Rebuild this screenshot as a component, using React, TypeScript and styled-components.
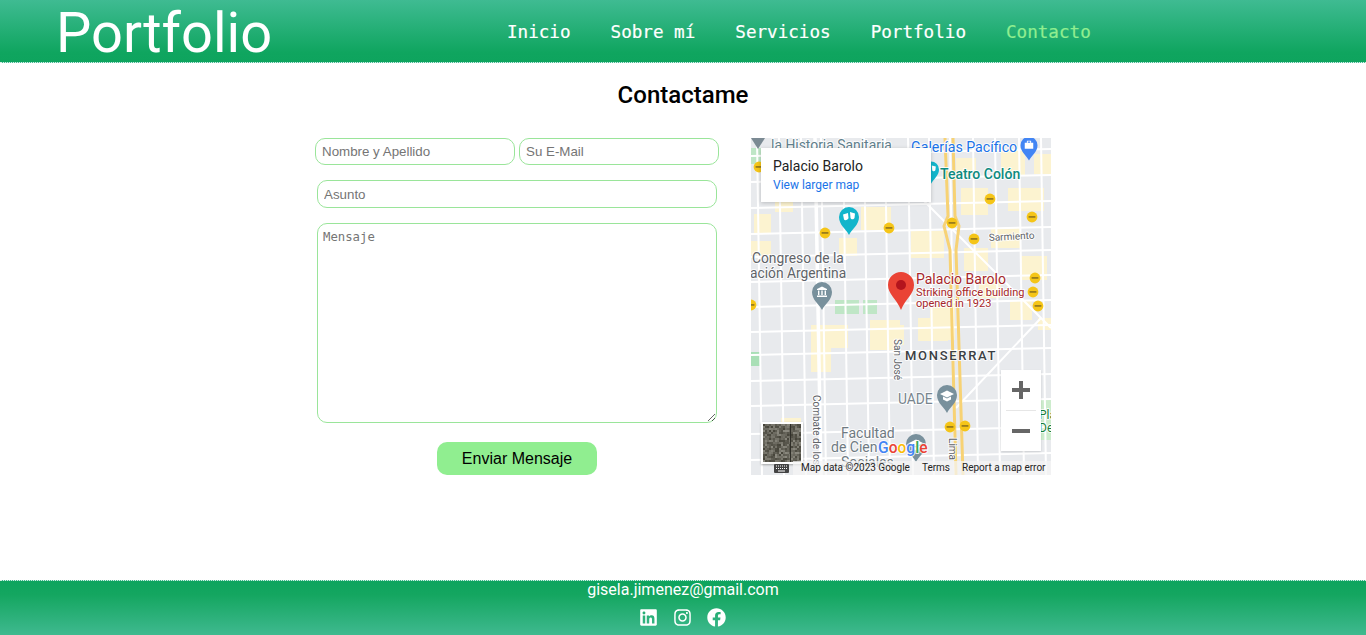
import React from "react";
import styled, { createGlobalStyle } from "styled-components";
import { FaLinkedin, FaInstagram, FaFacebook } from "react-icons/fa";

const Global = createGlobalStyle`
  html, body { margin: 0; padding: 0; background: #fff; }
  body { font-family: Roboto, "Liberation Sans", sans-serif; }
`;

const Page = styled.div`
  width: 1366px; height: 635px; display: flex; flex-direction: column; overflow: hidden;
`;
const Header = styled.header`
  height: 62px; flex: none; display: flex; align-items: center;
  background: linear-gradient(to bottom, #3fbb92 0%, #0fa55f 85%, #0ea45e 100%);
  border-bottom: 1px dotted #d8efe4;
  padding-left: 56px;
`;
const Logo = styled.h1`
  margin: 4px 0 0; width: 451px; font: 400 56px/58px Roboto, sans-serif; color: #fff; white-space: nowrap;
`;
const Nav = styled.nav`display: flex; gap: 40px; margin-top: 1px;`;
const NavLink = styled.a<{ $active?: boolean }>`
  font: 17.6px/24px "DejaVu Sans Mono", "Liberation Mono", monospace;
  -webkit-text-stroke: 0.2px currentColor;
  color: ${p => (p.$active ? "#90ee90" : "#fff")};
`;
const Main = styled.main`flex: 1; display: flex; flex-direction: column; align-items: center;`;
const Title = styled.h2`
  margin: 17px 0 28px; font: 500 24px/30px Roboto, sans-serif; color: #000;
`;
const Content = styled.div`display: flex; gap: 32px; align-items: flex-start;`;
const Form = styled.form`width: 404px; display: flex; flex-direction: column; align-items: center;`;
const Row = styled.div`display: flex; gap: 4px;`;
const Field = styled.input<{ $w: number; $h: number; $mt?: number }>`
  box-sizing: border-box; width: ${p => p.$w}px; height: ${p => p.$h}px; margin-top: ${p => p.$mt ?? 0}px;
  border: 1px solid #9ae59a; border-radius: 10px; padding: 0 6px; outline: none; background: #fff;
  font: 13.33px "Liberation Sans", Arial, sans-serif;
  &::placeholder { color: #757575; opacity: 1; }
`;
const Message = styled.textarea`
  box-sizing: border-box; width: 400px; height: 200px; margin-top: 15px; display: block;
  border: 1px solid #9ae59a; border-radius: 10px; padding: 6px 5px; outline: none; resize: vertical;
  font: 12.3px/15px "DejaVu Sans Mono", monospace; background: #fff;
  &::placeholder { color: #757575; opacity: 1; }
`;
const SendButton = styled.button`
  width: 160px; height: 33px; margin-top: 19px; border: none; border-radius: 10px;
  background: #90ee90; color: #000; font: 16px "Liberation Sans", Arial, sans-serif; padding: 0;
`;
const MapFrame = styled.div`position: relative; width: 300px; height: 337px; overflow: hidden; background: #e8eaed; flex: none;`;
const MapArt = styled.svg`
  display: block;
  text { paint-order: stroke; stroke: rgba(255,255,255,.85); stroke-width: 2px; stroke-linejoin: round; }
`;
const InfoCard = styled.div`
  position: absolute; left: 10px; top: 10px; width: 170px; height: 54px; box-sizing: border-box;
  background: #fff; padding: 10px 12px; box-shadow: 0 1px 4px rgba(0,0,0,.2);
`;
const InfoName = styled.div`font: 400 14px/17px Roboto, sans-serif; color: #222;`;
const InfoLink = styled.a`display: block; margin-top: 3px; font: 12px/15px Roboto, sans-serif; color: #1a73e8;`;
const Zoom = styled.div`
  position: absolute; left: 250px; top: 232px; width: 40px; height: 81px; background: #fff;
  display: flex; flex-direction: column; align-items: center;
  box-shadow: 0 1px 2px rgba(0,0,0,.12);
`;
const ZoomBtn = styled.div`flex: 1; display: flex; align-items: center; justify-content: center;`;
const ZoomRule = styled.div`width: 30px; height: 1px; background: #e6e6e6;`;
const Thumb = styled.div`
  position: absolute; left: 10px; top: 284px; width: 42px; height: 42px; box-sizing: border-box;
  border: 2px solid #fff; background: #5f5c4e;
  box-shadow: 0 1px 2px rgba(0,0,0,.3); overflow: hidden; line-height: 0;
`;
const Attribution = styled.div`
  position: absolute; left: 23px; right: 0; bottom: 0; height: 14px; display: flex; align-items: center;
  gap: 12px; font: 10px/14px Roboto, sans-serif; color: #222; white-space: nowrap;
`;
const AttrBar = styled.div`
  position: absolute; left: 42px; right: 0; bottom: 0; height: 14px; background: rgba(245,245,245,.72);
`;
const Footer = styled.footer`
  height: 55px; flex: none; box-sizing: border-box; display: flex; flex-direction: column; align-items: center;
  border-top: 1px dotted #d8efe4;
  background: linear-gradient(to bottom, #0ea45e 0%, #14a660 25%, #3fb98f 100%);
`;
const Email = styled.div`font: 16px/19px Roboto, sans-serif; color: #fff; margin-top: -1px;`;
const Socials = styled.div`display: flex; gap: 15px; margin-top: 9px; margin-left: -1px; color: #fff; font-size: 19px; line-height: 0;`;

const vStreets = [6, 28, 50, 70, 92, 113, 134, 157, 178, 199, 222, 244, 268, 290];
const hStreets = [14, 40, 66, 92, 115, 140, 165, 190, 213, 239, 264, 292, 318];
const blocks: [number, number, number, number][] = [
  [210,50,27,27],[257,50,36,23],[283,16,17,20],[3,76,17,20],[110,69,30,23],[160,93,33,27],[213,110,24,23],
  [0,103,20,14],[119,182,30,30],[179,167,25,35],[259,162,22,20],[30,280,20,25],[60,187,20,47],[80,187,17,23],
  [123,187,30,20],[167,180,30,23],[287,180,13,12],[250,12,24,26],[240,90,30,20],[205,20,20,18],[140,22,20,20],
  [60,20,22,14],[88,100,18,18],[270,118,26,24],[228,140,22,20],[24,60,18,14]
];
const shields: [number, number][] = [
  [8,29],[74,95],[138,90],[201,85],[239,61],[281,79],[223,101],[284,140],[282,154],[287,168],[0,167],[199,289],[214,288]
];

const cells = Array.from({ length: 361 }, (_, i) => {
  const v = (i * 7919 + (i * i) % 257 * 31) % 100;
  const g = 70 + Math.round(v * 0.7);
  return { x: (i % 19) * 2, y: Math.floor(i / 19) * 2, c: `rgb(${g},${g - 2},${g - 12})` };
});

function Pin({ x, y, c, s = 1, children }: { x: number; y: number; c: string; s?: number; children?: React.ReactNode }) {
  return (
    <g transform={`translate(${x} ${y}) scale(${s})`}>
      <path d="M0 16C-3 10-10 6-10-2A10 10 0 0 1 10-2C10 6 3 10 0 16Z" fill={c} />
      {children}
    </g>
  );
}
const Museum = () => <path d="M-5-5 0-7.5 5-5V-4H-5ZM-4-3.4h1.4V1H-4ZM-.7-3.4H.7V1H-.7ZM2.6-3.4H4V1H2.6ZM-5 1.6H5V3H-5Z" fill="#fff" />;
const Cap = () => <path d="M-7-3 0-6.5 7-3 0 .5ZM-4-.6 0 1.4 4-.6V2.5L0 4.5-4 2.5Z" fill="#fff" />;
const Masks = () => <path d="M-6-4.5-1-6-.5-1C-1 1-4 2-5 .5ZM1-7 6-5.5 5.5-1C4.5 1 2 .5 1.5-1Z" fill="#fff" />;
const Bag = () => <path d="M-5-5H5V2H-5ZM-2.5-5V-7.5H2.5V-5H1.4V-6.4H-1.4V-5Z" fill="#fff" />;

export default function App() {
  return (
    <Page>
      <Global />
      <Header>
        <Logo>Portfolio</Logo>
        <Nav>
          <NavLink>Inicio</NavLink>
          <NavLink>Sobre mí</NavLink>
          <NavLink>Servicios</NavLink>
          <NavLink>Portfolio</NavLink>
          <NavLink $active>Contacto</NavLink>
        </Nav>
      </Header>
      <Main>
        <Title>Contactame</Title>
        <Content>
          <Form>
            <Row>
              <Field $w={200} $h={27} placeholder="Nombre y Apellido" />
              <Field $w={200} $h={27} placeholder="Su E-Mail" />
            </Row>
            <Field $w={400} $h={28} $mt={15} placeholder="Asunto" />
            <Message placeholder="Mensaje" />
            <SendButton type="button">Enviar Mensaje</SendButton>
          </Form>
          <MapFrame>
            <MapArt width="300" height="337" viewBox="0 0 300 337" fontFamily="Roboto, sans-serif">
              <rect width="300" height="337" fill="#e8eaed" />
              {blocks.map(([x, y, w, h], i) => (
                <rect key={i} x={x} y={y} width={w} height={h} fill="#fcf3d0" />
              ))}
              <rect x="0" y="10" width="10" height="16" fill="#bfe6c6" />
              <rect x="0" y="214" width="9" height="14" fill="#a9dfb6" />
              <rect x="84" y="162" width="24" height="14" fill="#bfe6c6" />
              <rect x="112" y="162" width="14" height="14" fill="#bfe6c6" />
              <rect x="288" y="262" width="12" height="40" fill="#cdeccd" />
              <g stroke="#fff" strokeWidth="2">
                {vStreets.map(x => <line key={x} x1={x} y1="0" x2={x + 5} y2="337" />)}
                {hStreets.map(y => <line key={y} x1="0" y1={y + 4} x2="300" y2={y - 3} />)}
              </g>
              <line x1="172" y1="62" x2="300" y2="190" stroke="#fff" strokeWidth="2" />
              <line x1="205" y1="270" x2="290" y2="180" stroke="#fff" strokeWidth="2" />
              <line x1="64" y1="0" x2="70" y2="337" stroke="#fff" strokeWidth="3.5" />
              <g fill="none" stroke="#f7d274" strokeWidth="3">
                <path d="M194 0 L197 78 L193 88 L199 112 L205 337" />
                <path d="M202 0 L204 78 L208 88 L205 112 L212 337" />
              </g>
              {shields.map(([x, y], i) => (
                <g key={i}>
                  <circle cx={x} cy={y} r="5.4" fill="#f5c518" />
                  <rect x={x - 3.4} y={y - 1} width="6.8" height="1.8" fill="#9a7d1c" />
                </g>
              ))}
              <path d="M0 0H14L7 11Z" fill="#7b8a93" />
              <text x="20" y="12" fontSize="13.9" fill="#5f7f8c">la Historia Sanitaria</text>
              <text x="160" y="14" fontSize="14.2" fill="#1a73e8">Galerías Pacífico</text>
              <Pin x={278} y={9} c="#4285f4" s={0.85}><Bag /></Pin>
              <text x="189" y="41" fontSize="14" fontWeight="500" fill="#0d8a80">Teatro Colón</text>
              <Pin x={180} y={33} c="#12b5cb" s={0.8}><Masks /></Pin>
              <Pin x={98} y={81} c="#12b5cb"><Masks /></Pin>
              <text x="238" y="103" fontSize="10" fill="#5f6368" transform="rotate(-3 238 103)">Sarmiento</text>
              <text x="1" y="125" fontSize="13.8" fill="#5f6368">Congreso de la</text>
              <text x="-1" y="140" fontSize="13.8" fill="#5f6368">ación Argentina</text>
              <Pin x={71} y={156} c="#78909c"><Museum /></Pin>
              <g>
                <path d="M150 172C145 160 137 156 137 147A13 13 0 0 1 163 147C163 156 155 160 150 172Z" fill="#ea4335" />
                <circle cx="150" cy="147" r="5" fill="#b3141d" />
              </g>
              <text x="165" y="146" fontSize="14" fill="#a6262a">Palacio Barolo</text>
              <text x="165" y="158" fontSize="11" fill="#a6262a">Striking office building</text>
              <text x="165" y="169" fontSize="11" fill="#a6262a">opened in 1923</text>
              <text x="154" y="222" fontSize="13" fontWeight="500" letterSpacing="1.7" fill="#3c4043">MONSERRAT</text>
              <text x="143" y="201" fontSize="10" fill="#5f6368" transform="rotate(90 143 201)">San José</text>
              <text x="147" y="266" fontSize="13.8" fill="#78858e">UADE</text>
              <Pin x={196} y={259} c="#78909c"><Cap /></Pin>
              <text x="62" y="257" fontSize="10" fill="#5f6368" transform="rotate(90 62 257)">Combate de los</text>
              <text x="198" y="300" fontSize="10" fill="#5f6368" transform="rotate(90 198 300)">Lima</text>
              <text x="90" y="300" fontSize="14" fill="#6f7a82">Facultad</text>
              <text x="80" y="314" fontSize="14" fill="#6f7a82">de Cien</text>
              <text x="90" y="329" fontSize="14" fill="#6f7a82">Sociales</text>
              <Pin x={165} y={308} c="#78909c"><Cap /></Pin>
              <text x="127" y="315" fontSize="15.6" fontWeight="500">
                <tspan fill="#4285f4">G</tspan><tspan fill="#ea4335">o</tspan><tspan fill="#fbbc05">o</tspan><tspan fill="#4285f4">g</tspan><tspan fill="#34a853">l</tspan><tspan fill="#ea4335">e</tspan>
              </text>
              <text x="288" y="281" fontSize="12" fill="#188038">Pla</text>
              <text x="288" y="294" fontSize="12" fill="#188038">De</text>
            </MapArt>
            <InfoCard>
              <InfoName>Palacio Barolo</InfoName>
              <InfoLink>View larger map</InfoLink>
            </InfoCard>
            <Zoom>
              <ZoomBtn>
                <svg width="18" height="18" viewBox="0 0 18 18"><path d="M7 0h4v7h7v4h-7v7H7v-7H0V7h7z" fill="#666" /></svg>
              </ZoomBtn>
              <ZoomRule />
              <ZoomBtn>
                <svg width="18" height="4" viewBox="0 0 18 4"><rect width="18" height="4" fill="#666" /></svg>
              </ZoomBtn>
            </Zoom>
            <Thumb>
              <svg width="38" height="38" viewBox="0 0 38 38" shapeRendering="crispEdges">
                {cells.map((k, i) => <rect key={i} x={k.x} y={k.y} width="2" height="2" fill={k.c} />)}
                <path d="M27 0v38" stroke="#2f2e28" strokeWidth="1" />
              </svg>
            </Thumb>
            <AttrBar />
            <Attribution>
              <svg width="15" height="9" viewBox="0 0 15 9"><rect width="15" height="9" rx="1" fill="#444" /><path d="M2 2h11M2 4.5h11" stroke="#fff" strokeWidth="1" strokeDasharray="1 1" /><path d="M4 7h7" stroke="#fff" /></svg>
              <span>Map data ©2023 Google</span>
              <span>Terms</span>
              <span>Report a map error</span>
            </Attribution>
          </MapFrame>
        </Content>
      </Main>
      <Footer>
        <Email>gisela.jimenez@gmail.com</Email>
        <Socials>
          <FaLinkedin />
          <FaInstagram />
          <FaFacebook />
        </Socials>
      </Footer>
    </Page>
  );
}
